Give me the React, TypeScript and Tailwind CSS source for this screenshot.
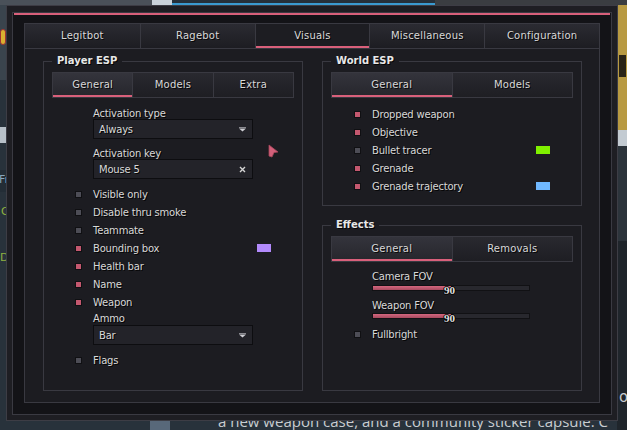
import React from "react";

const LABEL =
  "text-[10px] tracking-[-0.2px] text-[#d8d8d8] [text-shadow:1px_1px_0_rgba(0,0,0,0.85)] whitespace-nowrap";

function Check({ on }: { on: boolean }) {
  return (
    <span
      className={
        on
          ? "block w-[7px] h-[7px] border border-[#101013] bg-[#c4586f]"
          : "block w-[7px] h-[7px] border border-[#101013] bg-[#4d4d56]"
      }
    />
  );
}

function Row({ label, on, swatch }: { label: string; on: boolean; swatch?: string }) {
  return (
    <div className="flex items-center h-[18px] w-[196px]">
      <div className="w-[18px] flex items-center">
        <Check on={on} />
      </div>
      <span className={LABEL}>{label}</span>
      {swatch ? <span className={`ml-auto w-[14px] h-[8px] ${swatch}`} /> : null}
    </div>
  );
}

function Arrow() {
  return (
    <svg width="7" height="5" viewBox="0 0 7 5">
      <rect x="0" y="0" width="7" height="1" fill="#8a8a90" />
      <polygon points="0,1.5 7,1.5 3.5,4.5" fill="#cfcfd4" />
    </svg>
  );
}

function Combo({ value, clear }: { value: string; clear?: boolean }) {
  return (
    <div className="ml-[18px] w-[160px] h-[20px] bg-[#232329] border border-[#0d0d10] flex items-center justify-between pl-[5px] pr-[6px]">
      <span className={LABEL}>{value}</span>
      {clear ? (
        <svg width="7" height="7" viewBox="0 0 7 7">
          <path d="M1 1 L6 6 M6 1 L1 6" stroke="#d4d4d4" strokeWidth="1.4" />
        </svg>
      ) : (
        <Arrow />
      )}
    </div>
  );
}

function SmallLabel({ text, className }: { text: string; className: string }) {
  return (
    <div className={`ml-[18px] h-[13px] pt-[2px] flex items-center ${className}`}>
      <span className={LABEL}>{text}</span>
    </div>
  );
}

function SubTabs({ items, active }: { items: string[]; active: number }) {
  return (
    <div className="mx-[8px] mt-[10px] h-[26px] flex border border-[#393941]">
      {items.map((t, i) => (
        <div
          key={t}
          className={`flex-1 flex flex-col ${i > 0 ? "border-l border-[#393941]" : ""} ${
            i === active
              ? "bg-linear-to-b from-[#34343c] to-[#26262c]"
              : "bg-linear-to-b from-[#29292f] to-[#1e1e23]"
          }`}
        >
          <div className="flex-1 flex items-center justify-center pt-[1px]">
            <span className={`${LABEL} tracking-[0.2px]`}>{t}</span>
          </div>
          <div className={i === active ? "h-[2px] bg-[#d9607b]" : "h-[2px]"} />
        </div>
      ))}
    </div>
  );
}

function Group({
  title,
  className,
  children,
}: {
  title: string;
  className: string;
  children: React.ReactNode;
}) {
  return (
    <div className={`relative border border-[#393941] bg-[#1c1c21] ${className}`}>
      <span className="absolute left-[8px] top-[-7px] px-[5px] bg-[#1c1c21] text-[10px] leading-[12px] font-bold text-[#e8e8e8] [text-shadow:1px_1px_0_rgba(0,0,0,0.85)] whitespace-nowrap">
        {title}
      </span>
      {children}
    </div>
  );
}

function Slider({ value }: { value: number }) {
  return (
    <div className="relative ml-[18px] w-[158px] h-[6px] bg-[#28282e] border border-[#111114]">
      <div
        className="h-full bg-linear-to-b from-[#d4677f] to-[#a64a5f]"
        style={{ width: `${(value / 180) * 100}%` }}
      />
      <span className="absolute left-[71px] top-[-1px] text-[11px] leading-[10px] font-bold font-['Liberation_Serif',serif] text-[#e0e0e0] [text-shadow:1px_0_0_#000,-1px_0_0_#000,0_1px_0_#000,0_-1px_0_#000]">
        {value}
      </span>
    </div>
  );
}

export default function App() {
  const tabs = ["Legitbot", "Ragebot", "Visuals", "Miscellaneous", "Configuration"];
  return (
    <div className="relative w-[627px] h-[430px] overflow-hidden bg-[#28323b] font-['DejaVu_Sans',sans-serif]">
      {/* background game scene */}
      <div className="absolute left-0 top-0 w-[152px] h-[5px] bg-[#4a5159]" />
      <div className="absolute left-[152px] top-0 w-[20px] h-[5px] bg-[#c9d2da]" />
      <div className="absolute left-[172px] top-0 w-[263px] h-[5px] bg-[#25303a]" />
      <div className="absolute left-[172px] top-[3px] w-[263px] h-[2px] bg-[#3a9ad0]" />
      <div className="absolute left-[435px] top-0 w-[192px] h-[5px] bg-[#3a3d41]" />
      <div className="absolute left-0 top-[5px] w-[6px] h-[75px] bg-[#3a444d]" />
      <div className="absolute left-0 top-[29px] w-[6px] h-[16px] rounded-full bg-[#d8b030] border border-[#a03030]" />
      <div className="absolute left-0 top-[127px] w-[6px] h-[16px] bg-[#b7c0c8]" />
      <div className="absolute left-0 top-[170px] w-[6px] h-[22px] bg-[#232d36]" />
      <span className="absolute left-[-1px] top-[174px] text-[11px] leading-[12px] text-[#8aa6bc]">Fr</span>
      <span className="absolute left-[1px] top-[206px] text-[11px] leading-[12px] text-[#8fb040]">C</span>
      <span className="absolute left-[0px] top-[252px] text-[11px] leading-[12px] text-[#8fb040]">D</span>
      <div className="absolute left-[617px] top-[5px] w-[10px] h-[125px] bg-[#b89a42]" />
      <div className="absolute left-[619px] top-[55px] w-[7px] h-[22px] bg-[#2a2416]" />
      <div className="absolute left-[617px] top-[130px] w-[10px] h-[16px] bg-[#c3cbd2]" />
      <div className="absolute left-[617px] top-[146px] w-[10px] h-[95px] bg-[#2c343b]" />
      <div className="absolute left-[617px] top-[241px] w-[10px] h-[189px] bg-[#1f252b]" />
      <span className="absolute left-[619px] top-[388px] text-[15px] leading-[18px] text-[#c8ccd0]">o</span>
      <div className="absolute left-[150px] top-[405px] w-[20px] h-[25px] bg-[#58687a]" />
      <span className="absolute left-[218px] top-[412px] text-[15px] leading-[18px] text-[#c9cdd1] whitespace-nowrap font-['Open_Sans',sans-serif]">
        a new weapon case, and a community sticker capsule. C
      </span>

      {/* cheat window */}
      <div className="absolute left-[6px] top-[5px] z-10 w-[612px] h-[416px] border border-[#3d3d45] bg-[#1e1e23] px-[5px] pt-[6px] pb-[5px]">
        <div className="h-full border border-[#3a3a42] bg-[#131317] flex flex-col">
          <div className="mx-[1px] h-[2px] bg-[#d9607b]" />
          <div className="flex-1 flex flex-col px-[11px] pt-[8px] pb-[11px]">
            {/* main tabs */}
            <div className="grid grid-cols-5 h-[25px] border-t border-x border-[#393941]">
              {tabs.map((t, i) => (
                <div
                  key={t}
                  className={`flex flex-col ${i > 0 ? "border-l border-[#393941]" : ""} ${
                    t === "Visuals"
                      ? "bg-[#1d1d22]"
                      : "bg-linear-to-b from-[#2b2b32] to-[#1d1d22]"
                  }`}
                >
                  <div className="flex-1 flex items-center justify-center pt-[1px]">
                    <span className={`${LABEL} tracking-[0.2px]`}>{t}</span>
                  </div>
                  <div className={t === "Visuals" ? "h-[2px] bg-[#d9607b]" : "h-[2px]"} />
                </div>
              ))}
            </div>
            {/* content panel */}
            <div className="flex-1 border border-[#393941] bg-[#1c1c21] pl-[18px] pr-[17px] pt-[12px] pb-[11px] flex gap-[19px]">
              <Group title="Player ESP" className="w-[260px] h-full">
                <SubTabs items={["General", "Models", "Extra"]} active={0} />
                <div className="pl-[31px] flex flex-col">
                  <SmallLabel text="Activation type" className="mt-[8px]" />
                  <Combo value="Always" />
                  <SmallLabel text="Activation key" className="mt-[7px]" />
                  <Combo value="Mouse 5" clear />
                  <div className="mt-[6px] flex flex-col">
                    <Row label="Visible only" on={false} />
                    <Row label="Disable thru smoke" on={false} />
                    <Row label="Teammate" on={false} />
                    <Row label="Bounding box" on={true} swatch="bg-[#b28afc]" />
                    <Row label="Health bar" on={true} />
                    <Row label="Name" on={true} />
                    <Row label="Weapon" on={true} />
                  </div>
                  <SmallLabel text="Ammo" className="" />
                  <div className="mt-[1px]">
                    <Combo value="Bar" />
                  </div>
                  <div className="mt-[6px]">
                    <Row label="Flags" on={false} />
                  </div>
                </div>
              </Group>
              <div className="w-[260px] flex flex-col gap-[19px]">
                <Group title="World ESP" className="h-[145px]">
                  <SubTabs items={["General", "Models"]} active={0} />
                  <div className="pl-[31px] mt-[7px] flex flex-col">
                    <Row label="Dropped weapon" on={true} />
                    <Row label="Objective" on={true} />
                    <Row label="Bullet tracer" on={false} swatch="bg-[#80f000]" />
                    <Row label="Grenade" on={true} />
                    <Row label="Grenade trajectory" on={true} swatch="bg-[#70b8ff]" />
                  </div>
                </Group>
                <Group title="Effects" className="flex-1">
                  <SubTabs items={["General", "Removals"]} active={0} />
                  <div className="pl-[31px] flex flex-col">
                    <SmallLabel text="Camera FOV" className="mt-[7px]" />
                    <div className="mt-[3px]">
                      <Slider value={90} />
                    </div>
                    <SmallLabel text="Weapon FOV" className="mt-[7px]" />
                    <div className="mt-[2px]">
                      <Slider value={90} />
                    </div>
                    <div className="mt-[6px]">
                      <Row label="Fullbright" on={false} />
                    </div>
                  </div>
                </Group>
              </div>
            </div>
          </div>
        </div>
      </div>

      {/* mouse cursor */}
      <svg className="absolute left-[268px] top-[144px] z-20" width="11" height="14" viewBox="0 0 11 14">
        <polygon points="1,1 10,8 6,8.5 4,13 1,12" fill="#d2607a" stroke="#a8465c" strokeWidth="0.8" />
      </svg>
    </div>
  );
}
